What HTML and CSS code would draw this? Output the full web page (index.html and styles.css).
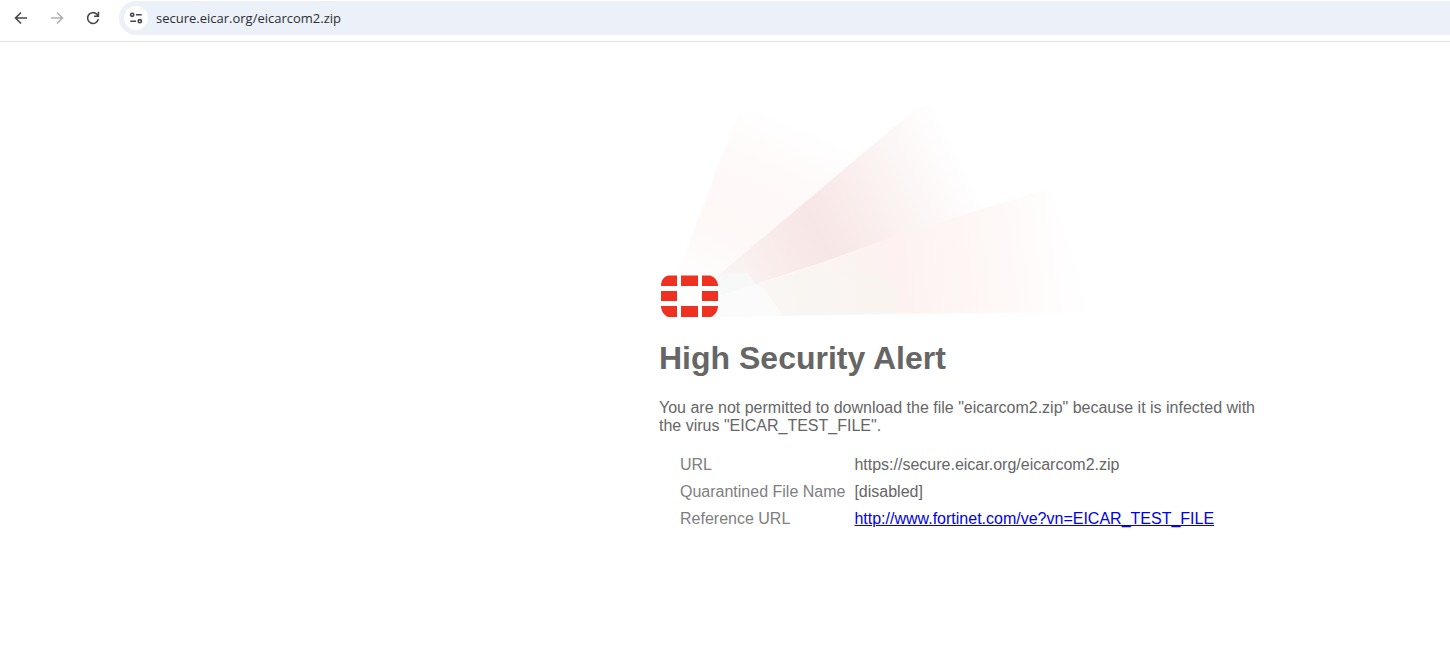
FILE: index.html
```html
<!DOCTYPE html>
<html lang="en">
<head>
    <meta charset="UTF-8">
    <meta name="viewport" content="width=device-width, initial-scale=1.0">
    <title>High Security Alert</title>
    <link rel="stylesheet" href="styles.css">
</head>
<body>
    <header class="toolbar">
        <button class="nav-button" type="button" aria-label="Back">
            <svg width="16" height="16" viewBox="0 0 16 16"><path d="M14 8H3M8 2.5L2.5 8L8 13.5"/></svg>
        </button>
        <button class="nav-button" type="button" aria-label="Forward" disabled>
            <svg width="16" height="16" viewBox="0 0 16 16"><path d="M2 8H13M8 2.5L13.5 8L8 13.5"/></svg>
        </button>
        <button class="nav-button" type="button" aria-label="Reload">
            <svg width="16" height="16" viewBox="0 0 16 16"><path d="M13.3 9.2A5.4 5.4 0 1 1 11.8 4.2L13 5.8M13.4 1.8V6.2H9"/></svg>
        </button>
        <div class="address-bar">
            <button class="site-info" type="button" aria-label="View site information">
                <svg width="14" height="14" viewBox="0 0 14 14">
                    <circle cx="3.2" cy="3.8" r="1.6"/>
                    <path d="M7 3.8H12.7M1.3 10.2H7"/>
                    <circle cx="10.8" cy="10.2" r="1.6"/>
                </svg>
            </button>
            <input class="address" type="text" aria-label="Address" value="secure.eicar.org/eicarcom2.zip">
        </div>
    </header>

    <main class="page">
        <div class="message">
            <svg class="banner" width="440" height="230" viewBox="9 10 440 230" role="img" aria-label="Fortinet">
                <defs>
                    <linearGradient id="ray-left" gradientUnits="userSpaceOnUse" x1="70" y1="190" x2="140" y2="30">
                        <stop offset="0" stop-color="#fefcfc"/>
                        <stop offset="0.3" stop-color="#fef8f7"/>
                        <stop offset="0.7" stop-color="#fefaf9"/>
                        <stop offset="1" stop-color="#ffffff"/>
                    </linearGradient>
                    <linearGradient id="ray-middle" gradientUnits="userSpaceOnUse" x1="65" y1="200" x2="315" y2="75">
                        <stop offset="0" stop-color="#fbf6f6"/>
                        <stop offset="0.25" stop-color="#f9eceb"/>
                        <stop offset="0.42" stop-color="#f7e6e6"/>
                        <stop offset="0.65" stop-color="#faf0ef"/>
                        <stop offset="1" stop-color="#ffffff"/>
                    </linearGradient>
                    <linearGradient id="ray-right" gradientUnits="userSpaceOnUse" x1="70" y1="215" x2="435" y2="165">
                        <stop offset="0" stop-color="#fafafa"/>
                        <stop offset="0.25" stop-color="#fbf5f2"/>
                        <stop offset="0.5" stop-color="#fdf2f1"/>
                        <stop offset="0.75" stop-color="#fef8f7"/>
                        <stop offset="0.93" stop-color="#fffdfd"/>
                        <stop offset="1" stop-color="#ffffff"/>
                    </linearGradient>
                </defs>
                <path fill="url(#ray-left)" d="M26 187L89 22L115 22L209 66L66 187Z"/>
                <path fill="url(#ray-middle)" d="M66 187L262 22L280 13L345 116L310 128L72 205Z"/>
                <path fill="url(#ray-right)" d="M70 206L145 182L240 148L310 126L400 98L440 222L225 224L68 227Z"/>
                <path fill="#f7f8f8" d="M68 184L98 183L106 194L70 205Z"/>
                <path fill="#fbfbfb" d="M70 206L106 194L114 200L134 226L68 227Z"/>
                <path fill="#f8f5f1" opacity="0.5" d="M145 182L238 184L248 208L246 224L134 226L114 197L106 194Z"/>
                <g fill="#ee3120">
                    <path d="M27 185.500V196H11C11 190 14 186 19 185.500Z"/>
                    <path d="M31 185.500H48V196H31Z"/>
                    <path d="M52 185.500H60C65 187 68 191 68 196H52Z"/>
                    <path d="M11 201H27V211H11Z"/>
                    <path d="M52 201H68V211H52Z"/>
                    <path d="M11 216H27V227H18C14 225 11 221 11 216Z"/>
                    <path d="M31 216H48V227H31Z"/>
                    <path d="M52 216H68C68 221 65 225 61 227H52Z"/>
                </g>
            </svg>
            <h1>High Security Alert</h1>
            <p>You are not permitted to download the file "eicarcom2.zip" because it is infected with the virus "EICAR_TEST_FILE".</p>
            <table class="details">
                <tr>
                    <th scope="row">URL</th>
                    <td>https://secure.eicar.org/eicarcom2.zip</td>
                </tr>
                <tr>
                    <th scope="row">Quarantined File Name</th>
                    <td>[disabled]</td>
                </tr>
                <tr>
                    <th scope="row">Reference URL</th>
                    <td><a href="http://www.fortinet.com/ve?vn=EICAR_TEST_FILE">http://www.fortinet.com/ve?vn=EICAR_TEST_FILE</a></td>
                </tr>
            </table>
        </div>
    </main>
</body>
</html>
```

FILE: styles.css
```css
body {
    margin: 0;
    background-color: #ffffff;
    color: #666666;
    font-family: "Liberation Sans", Arial, sans-serif;
    font-size: 16px;
    line-height: 18px;
}

/* Browser toolbar */
.toolbar {
    display: flex;
    align-items: center;
    gap: 8px;
    padding: 1px 0 6px 7px;
    border-bottom: 1px solid #dfe1e5;
}

.nav-button {
    display: flex;
    align-items: center;
    justify-content: center;
    width: 28px;
    height: 28px;
    padding: 0;
    border: none;
    border-radius: 50%;
    background: none;
}

.nav-button svg,
.site-info svg {
    fill: none;
    stroke: #474747;
    stroke-width: 1.6;
}

.nav-button:disabled svg {
    stroke: #b0b0b0;
}

.address-bar {
    display: flex;
    flex: 1;
    align-items: center;
    gap: 8px;
    height: 34px;
    margin-left: 4px;
    padding-left: 5px;
    border-radius: 17px 0 0 17px;
    background-color: #ebf0f9;
}

.site-info {
    display: flex;
    align-items: center;
    justify-content: center;
    width: 24px;
    height: 24px;
    padding: 0;
    border: none;
    border-radius: 50%;
    background-color: #ffffff;
}

.address {
    flex: 1;
    padding: 0;
    border: none;
    outline: none;
    background: none;
    color: #2d2f33;
    font-family: "Open Sans", "Segoe UI", sans-serif;
    font-size: 13px;
    line-height: 20px;
}

/* Block message */
.page {
    display: flex;
    justify-content: flex-end;
    padding: 58px 191px 0 20px;
}

.message {
    width: 600px;
}

.banner {
    display: block;
    max-width: 100%;
}

h1 {
    margin: 10px 0 23px;
    font-size: 32px;
    line-height: 36px;
}

p {
    margin: 0;
}

.details {
    margin: 16px 0 0 20px;
    border-collapse: collapse;
}

.details th,
.details td {
    padding: 5px 8px 4px 1px;
    text-align: left;
    font-weight: normal;
}

.details th {
    color: #808080;
}

.details a {
    color: #0000ee;
}
```
